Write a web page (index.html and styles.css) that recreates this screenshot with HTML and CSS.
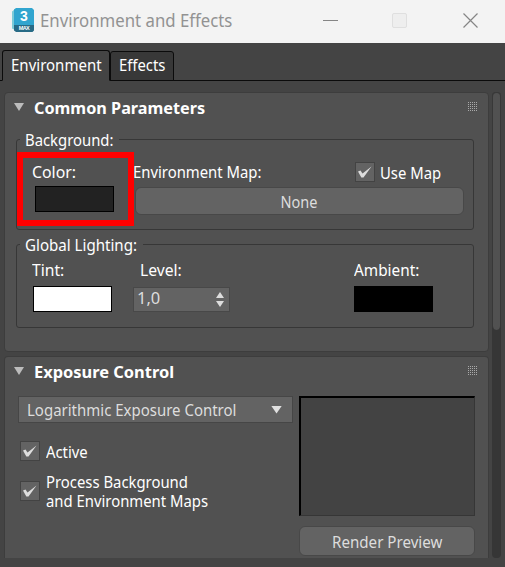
FILE: index.html
```html
<!DOCTYPE html>
<html lang="en">
<head>
<meta charset="utf-8">
<title>Environment and Effects</title>
<link rel="stylesheet" href="styles.css">
</head>
<body>
<header class="titlebar">
  <svg class="logo" width="23" height="25" viewBox="0 0 23 25">
    <path d="M0 3.500 3 1v21l-3-1.500z" fill="#7ccbd8"/>
    <path d="M2 1.500 4 0h16l2 2v15H2z" fill="#31a5cf"/>
    <path d="M2 17h20v5.500L20.500 24H4l-2-1.500z" fill="#286b86"/>
    <text x="12" y="13" class="logo-num">3</text>
    <text x="12.200" y="21.800" class="logo-max" textLength="11">MAX</text>
  </svg>
  <h1 class="title"><span class="t t-title">Environment and Effects</span></h1>
  <svg class="winctl" width="156" height="17" viewBox="0 0 156 17">
    <path d="M0 8.500h15" stroke="#858585" fill="none"/>
    <rect x="69.500" y="1.500" width="14" height="14" rx="1.500" fill="#eee" stroke="#dfdfdf"/>
    <path d="M140.500 1.500l14 14M154.500 1.500l-14 14" stroke="#858585" stroke-width="1.200" fill="none"/>
  </svg>
</header>
<nav class="tabs">
  <div class="tab active"><span class="t t-env">Environment</span></div>
  <div class="tab"><span class="t t-eff">Effects</span></div>
</nav>
<main class="content">
  <div class="rollouts">
    <section class="panel common">
      <div class="head"><i class="tri"></i><h2><span class="t t-common">Common Parameters</span></h2><i class="grip"></i></div>
      <div class="group bg">
        <div class="legend"><span class="t t-bg">Background:</span></div>
        <div class="col-color"><span class="t t-color">Color:</span><div class="swatch dark"></div></div>
        <div class="col-map">
          <div class="map-row"><span class="t t-map">Environment Map:</span>
            <label class="check"><svg class="box" viewBox="1 1 18 18"><path d="M3 9.500 5.500 8.500 7.500 11.500 16.500 4.500 8.500 15.500H6.300z"/></svg><span class="t t-use">Use Map</span></label></div>
          <button class="btn none"><span class="t c t-none">None</span></button>
        </div>
        <div class="highlight"></div>
      </div>
      <div class="group light">
        <div class="legend"><span class="t t-gl">Global Lighting:</span></div>
        <div class="col-tint"><span class="t t-tint">Tint:</span><div class="swatch white"></div></div>
        <div class="col-level"><span class="t t-level">Level:</span>
          <div class="spin"><span class="t t-num">1,0</span><svg width="8" height="15" viewBox="0 0 8 15"><path d="M0 6 4 0l4 6zM0 9h8l-4 6z"/></svg></div></div>
        <div class="col-amb"><span class="t t-amb">Ambient:</span><div class="swatch black"></div></div>
      </div>
    </section>
    <section class="panel exposure">
      <div class="head"><i class="tri"></i><h2><span class="t t-exp">Exposure Control</span></h2><i class="grip"></i></div>
      <div class="exp-body">
        <div class="exp-left">
          <div class="select"><span class="t t-log">Logarithmic Exposure Control</span><i class="arrow"></i></div>
          <label class="check active-check"><svg class="box" viewBox="1 1 18 18"><path d="M3 9.500 5.500 8.500 7.500 11.500 16.500 4.500 8.500 15.500H6.300z"/></svg><span class="t t-act">Active</span></label>
          <label class="check process"><svg class="box" viewBox="1 1 18 18"><path d="M3 9.500 5.500 8.500 7.500 11.500 16.500 4.500 8.500 15.500H6.300z"/></svg><span class="lines"><span class="t t-p1">Process Background</span><span class="t t-p2">and Environment Maps</span></span></label>
        </div>
        <div class="exp-right">
          <div class="preview"></div>
          <button class="btn render"><span class="t c t-render">Render Preview</span></button>
        </div>
      </div>
    </section>
  </div>
  <div class="track"><div class="thumb"></div></div>
</main>
</body>
</html>
```
FILE: styles.css
```css
* { box-sizing: border-box; }
body { margin: 0; width: 505px; height: 567px; overflow: hidden; background: #444; color: #fff; font: 16.5px/20px "Noto Sans", sans-serif; display: flex; flex-direction: column; }
h1, h2 { margin: 0; font: inherit; }
.t { display: inline-block; white-space: nowrap; transform: scaleX(var(--s, .9)); transform-origin: left center; }
.t.c { transform-origin: center; }
.t-title { --s: .906; }
.t-env { --s: .91; }
.t-common { --s: .983; }
.t-exp { --s: .995; }
.t-color { --s: .96; }
.t-tint, .t-level { --s: .95; }
.t-amb { --s: .93; }
.t-gl { --s: .915; }
.t-num { --s: 1; }
.t-log { --s: .908; }
.t-render { --s: .917; }
.t-none { --s: .88; }

.titlebar { height: 43px; flex: none; background: #f3f3f3; display: flex; align-items: flex-start; padding: 8px 0 0 12px; }
.logo-num { font: bold 14px "Liberation Sans", sans-serif; fill: #fff; text-anchor: middle; }
.logo-max { font: bold 5.5px "Liberation Sans", sans-serif; fill: #fff; text-anchor: middle; }
.title { width: 288px; padding-left: 5px; color: #929292; font-size: 18.5px; line-height: 24px; }
.winctl { margin-top: 4px; }

.tabs { height: 38px; flex: none; padding: 7px 0 0 2px; display: flex; align-items: flex-end; background: linear-gradient(#0b0b0b, #0b0b0b) 0 37px / 100% 1px no-repeat; }
.tab { height: 30px; border: 1px solid #0b0b0b; border-radius: 3px 3px 0 0; background: #383838; width: 64px; padding: 3px 0 0 8px; }
.tab.active { height: 31px; width: 108px; background: #444; border-bottom-color: #444; padding: 4px 0 0 8px; }

.content { flex: 1; display: flex; gap: 3px; padding: 11px 0 9px 4px; }
.rollouts { width: 485px; display: flex; flex-direction: column; gap: 4px; overflow: hidden; }
.panel { background: #515151; border: 1px solid #3d3d3d; border-radius: 4px; }
.common { height: 260px; flex: none; }
.exposure { flex: 1; border-bottom: 0; border-radius: 4px 4px 0 0; }
.head { display: flex; padding: 5px 11px 0 9px; height: 46px; }
.head h2 { flex: 1; font-weight: bold; line-height: 20px; }
.tri { width: 10px; height: 8px; margin: 5px 10px 0 0; background: #bcbcbc; clip-path: polygon(0 0, 100% 0, 50% 100%); }
.grip { width: 9px; height: 9px; margin-top: 4px; background: conic-gradient(#aaa 0 25%, #515151 0) -1px 0 / 2px 2px; }

.group { width: 458px; margin-left: 11px; border: 1px solid #373737; border-radius: 3px; position: relative; display: flex; align-items: flex-start; }
.group.bg { height: 91px; }
.group.light { height: 84px; margin-top: 14px; }
.legend { position: absolute; left: 3px; top: -10px; height: 20px; padding-left: 5px; background: #515151; }
.bg .legend { width: 99px; }
.light .legend { width: 123px; }
.col-color { width: 116px; padding: 22px 0 0 15px; }
.col-color .swatch { margin: 4px 0 0 3px; }
.swatch { width: 79px; height: 26px; border: 1px solid #000; }
.dark { background: #222; }
.white { background: #fff; }
.black { background: #000; }
.map-row { display: flex; width: 331px; height: 25px; }
.col-map { padding-top: 22px; }
.map-row > .t { width: 222px; }
.check { display: flex; gap: 6px; align-items: center; }
.map-row .check { height: 20px; gap: 5px; }
.map-row .check .t { margin-top: 2px; }
.box { flex: none; width: 20px; height: 20px; background: #636363; border: 1px solid #434343; fill: #ddd; }
.btn { font: inherit; color: #ddd; background: #636363; border: 1px solid #484848; border-radius: 6px; padding: 0; text-align: center; display: block; }
.none { width: 329px; height: 28px; margin-left: 2px; padding-top: 2px; }
.highlight { position: absolute; left: 0; top: 12px; width: 117px; height: 74px; border: 6px solid #f00; }

.col-tint { width: 116px; padding: 15px 0 0 15px; }
.col-tint .swatch { margin: 6px 0 0 1px; }
.col-level { width: 221px; padding-top: 15px; }
.col-level > .t { margin-left: 7px; }
.col-amb { padding-top: 15px; }
.col-amb .swatch { margin-top: 6px; }
.spin { width: 97px; height: 25px; margin-top: 7px; border: 1px solid #484848; background: #636363; color: #ddd; display: flex; justify-content: space-between; padding: 0 5px 0 3px; align-items: center; }
.spin .t { margin-top: -4px; }
.spin svg { fill: #ddd; }

.exp-body { display: flex; gap: 6px; padding-left: 13px; margin-top: -7px; }
.exp-left { width: 275px; }
.select { height: 27px; border: 1px solid #464646; background: #636363; color: #ddd; display: flex; align-items: center; justify-content: space-between; padding: 0 10px 0 8px; }
.arrow { width: 11px; height: 8px; background: #e0e0e0; clip-path: polygon(0 0, 100% 0, 50% 100%); }
.active-check { margin: 18px 0 0 2px; height: 20px; }
.active-check .t { margin-top: 2px; }
.process { margin: 11px 0 0 2px; height: 38px; align-items: flex-start; }
.process .box { margin-top: 9px; }
.lines { display: flex; flex-direction: column; line-height: 19px; }
.preview { width: 176px; height: 120px; background: #434343; border: 1px solid #363636; border-top: 2px solid #000; border-left: 2px solid #000; }
.render { width: 176px; height: 30px; margin-top: 10px; padding-top: 2px; }

.track { width: 9px; background: #363636; border-radius: 4px; }
.thumb { height: 238px; background: #515151; border: 1px solid #383838; border-bottom: 0; border-radius: 5px; }
```
